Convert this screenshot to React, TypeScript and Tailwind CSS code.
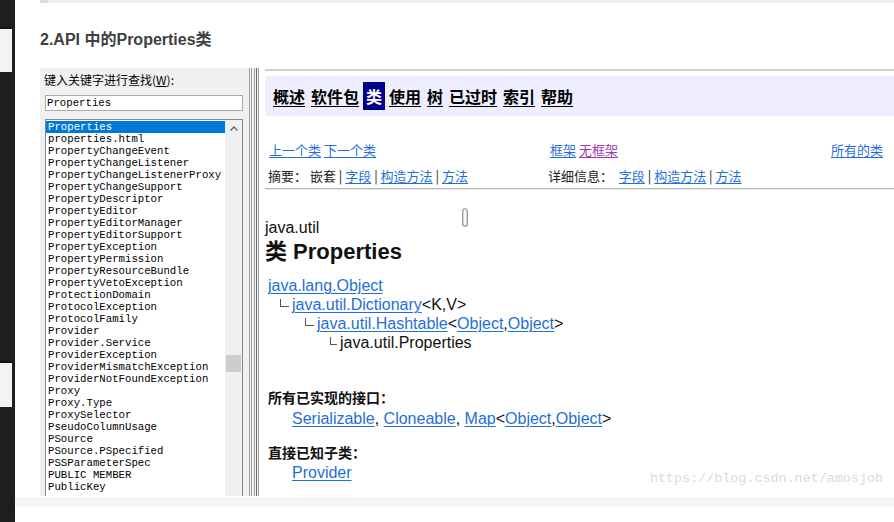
import React from 'react';

const classList = [
  'Properties',
  'properties.html',
  'PropertyChangeEvent',
  'PropertyChangeListener',
  'PropertyChangeListenerProxy',
  'PropertyChangeSupport',
  'PropertyDescriptor',
  'PropertyEditor',
  'PropertyEditorManager',
  'PropertyEditorSupport',
  'PropertyException',
  'PropertyPermission',
  'PropertyResourceBundle',
  'PropertyVetoException',
  'ProtectionDomain',
  'ProtocolException',
  'ProtocolFamily',
  'Provider',
  'Provider.Service',
  'ProviderException',
  'ProviderMismatchException',
  'ProviderNotFoundException',
  'Proxy',
  'Proxy.Type',
  'ProxySelector',
  'PseudoColumnUsage',
  'PSource',
  'PSource.PSpecified',
  'PSSParameterSpec',
  'PUBLIC MEMBER',
  'PublicKey',
];

const navItems = ['概述', '软件包', '类', '使用', '树', '已过时', '索引', '帮助'];

const link = 'text-[#1f6fd8] underline underline-offset-[2px] decoration-[1px]';

// little "└" connector used in the class hierarchy
const Elbow = ({ w = 9 }: { w?: number }) => (
  <span
    className={`inline-block h-[8px] border-l border-b border-[#555] align-[3px] mr-[3px] ${w === 9 ? 'w-[9px]' : 'w-[7px]'}`}
  />
);

const LeftStrip = () => (
  <div className="w-[15px] shrink-0 bg-[#1e1e1e] flex flex-col">
    <div className="h-[27px]" />
    <div className="h-[45px] w-[12px] bg-[#f3f3f3] border-t-2 border-[#111]" />
    <div className="h-[289px]" />
    <div className="h-[46px] w-[12px] bg-[#f3f3f3] border-t-2 border-[#111]" />
  </div>
);

const ClassFinder = () => (
  <div className="w-[206px] shrink-0 bg-[#f0f0f0] flex flex-col pl-[5px] pr-[3px]">
    <div className="pt-[5px] -ml-[1px] text-[12px] leading-[14px] text-black font-['Noto_Sans_CJK_SC',sans-serif]">
      键入关键字进行查找(<span className="underline">W</span>):
    </div>
    <div className="mt-[8px] h-[16px] border border-[#a9abb1] bg-white pl-[1px] text-[10.7px] leading-[14px] text-black font-['Liberation_Mono',monospace]">
      Properties
    </div>
    <div className="mt-[8px] flex-1 flex min-h-0 overflow-hidden border-l border-t border-r border-[#828790] bg-white">
      <div className="flex-1 pt-[1px] text-[10.7px] leading-[12px] text-black font-['Liberation_Mono',monospace] whitespace-pre">
        {classList.map((name, i) => (
          <div key={name} className={i === 0 ? 'h-[12px] pl-[2px] bg-[#0078d7] text-white' : 'h-[12px] pl-[2px]'}>
            {name}
          </div>
        ))}
      </div>
      <div className="w-[17px] bg-[#f0f0f0] flex flex-col">
        <div className="h-[17px] flex items-center justify-center">
          <svg width="8" height="5" viewBox="0 0 8 5">
            <path d="M0.5 4.5 L4 1 L7.5 4.5" fill="none" stroke="#606060" strokeWidth="1.3" />
          </svg>
        </div>
        <div className="mt-[218px] mx-[1px] h-[17px] bg-[#cdcdcd]" />
      </div>
    </div>
  </div>
);

const Splitter = () => (
  <div className="w-[12px] shrink-0 flex bg-[#f0f0f0]">
    <div className="w-[3px]" />
    <div className="w-px bg-[#a0a0a0]" />
    <div className="w-px" />
    <div className="w-px bg-[#a0a0a0]" />
    <div className="w-[2px]" />
    <div className="w-px bg-[#a0a0a0]" />
    <div className="w-px" />
    <div className="w-px bg-[#696969]" />
    <div className="w-px" />
  </div>
);

const ClassPage = () => (
  <div className="flex-1 relative bg-white border-l border-[#9a9a9a] pl-[6px] flex flex-col text-[#111] font-['Liberation_Sans','Noto_Sans_CJK_SC',sans-serif]">
    <div className="mt-[1px] h-[2px] bg-[#d0d0d0]" />

    {/* navigation bar */}
    <div className="mt-[5px] h-[40px] bg-[#eeeeff] flex items-center pl-[8px] gap-[6px] text-[16px] leading-[16px] font-bold font-['Noto_Sans_CJK_SC',sans-serif]">
      {navItems.map(item =>
        item === '类' ? (
          <span key={item} className="bg-[#00008b] text-white px-[3px] -mx-[2px] py-[6px]">
            {item}
          </span>
        ) : (
          <span key={item} className="text-black underline underline-offset-[3px]">
            {item}
          </span>
        )
      )}
    </div>

    <div className="mt-[25px] h-[18px] flex pl-[4px] pr-[11px] text-[13px] leading-[18px] font-['Noto_Sans_CJK_SC',sans-serif]">
      <div className="w-[281px]">
        <span className={link}>上一个类</span> <span className={link}>下一个类</span>
      </div>
      <div>
        <span className={link}>框架</span> <span className="text-[#a23bb5] underline underline-offset-[2px]">无框架</span>
      </div>
      <div className="ml-auto">
        <span className={link}>所有的类</span>
      </div>
    </div>
    <div className="mt-[8px] h-[18px] flex pl-[3px] text-[13px] leading-[18px] text-[#222] font-['Noto_Sans_CJK_SC',sans-serif]">
      <div className="w-[280px]">
        摘要：&nbsp;嵌套 | <span className={link}>字段</span> | <span className={link}>构造方法</span> | <span className={link}>方法</span>
      </div>
      <div>
        详细信息：&nbsp;&nbsp;<span className={link}>字段</span> | <span className={link}>构造方法</span> | <span className={link}>方法</span>
      </div>
    </div>
    <div className="mt-[3px] h-[2px] border-t border-[#b8b8b8] bg-[#e6e6e6]" />

    <div className="mt-[29px] text-[16px] leading-[18px]">java.util</div>
    <div className="mt-[2px] text-[22px] leading-[26px] font-bold">类 Properties</div>

    {/* hierarchy */}
    <div className="mt-[11px] pl-[3px] text-[16px] leading-[19px] whitespace-nowrap">
      <div>
        <span className={link}>java.lang.Object</span>
      </div>
      <div className="pl-[12px]">
        <Elbow />
        <span className={link}>java.util.Dictionary</span>&lt;K,V&gt;
      </div>
      <div className="pl-[37px]">
        <Elbow />
        <span className={link}>java.util.Hashtable</span>&lt;<span className={link}>Object</span>,<span className={link}>Object</span>&gt;
      </div>
      <div className="pl-[62px]">
        <Elbow w={7} />
        java.util.Properties
      </div>
    </div>

    <div className="mt-[35px] pl-[3px] text-[14px] leading-[20px] font-bold font-['Noto_Sans_CJK_SC',sans-serif]">所有已实现的接口：</div>
    <div className="mt-[2px] pl-[27px] text-[16px] leading-[19px] whitespace-nowrap">
      <span className={link}>Serializable</span>, <span className={link}>Cloneable</span>, <span className={link}>Map</span>&lt;
      <span className={link}>Object</span>,<span className={link}>Object</span>&gt;
    </div>
    <div className="mt-[14px] pl-[3px] text-[14px] leading-[20px] font-bold font-['Noto_Sans_CJK_SC',sans-serif]">直接已知子类：</div>
    <div className="mt-[1px] pl-[27px] text-[16px] leading-[19px]">
      <span className={link}>Provider</span>
    </div>

    {/* text cursor captured in the screenshot */}
    <svg className="absolute left-[203px] top-[140px]" width="6" height="19" viewBox="0 0 6 19">
      <rect x="0.75" y="0.75" width="4.5" height="17.5" rx="2" fill="#fafafa" stroke="#8a8a8a" strokeWidth="1.2" />
    </svg>

    {/* blog watermark */}
    <div className="absolute right-[11px] top-[403px] text-[13.4px] leading-[16px] text-[#dadada] font-['Liberation_Mono',monospace]">
      https://blog.csdn.net/amosjob
    </div>
  </div>
);

const App = () => {
  return (
    <div className="w-[894px] h-[522px] bg-white flex overflow-hidden">
      <LeftStrip />
      <div className="flex-1 flex flex-col min-w-0">
        <div className="ml-[25px] h-[3px] flex bg-[#eef0f4]">
          <div className="w-[8px] bg-[#dcdde2]" />
        </div>
        <h2 className="ml-[25px] mt-[25px] h-[24px] text-[16px] leading-[24px] font-bold text-[#404040] font-['Liberation_Sans','Noto_Sans_CJK_SC',sans-serif]">
          2.API 中的Properties类
        </h2>

        {/* javadoc screenshot */}
        <div className="ml-[25px] mt-[16px] h-[428px] flex">
          <ClassFinder />
          <Splitter />
          <ClassPage />
        </div>

        <div className="mt-[1px] h-[10px] bg-[#f4f5f6]" />
      </div>
    </div>
  );
};

export default App;
